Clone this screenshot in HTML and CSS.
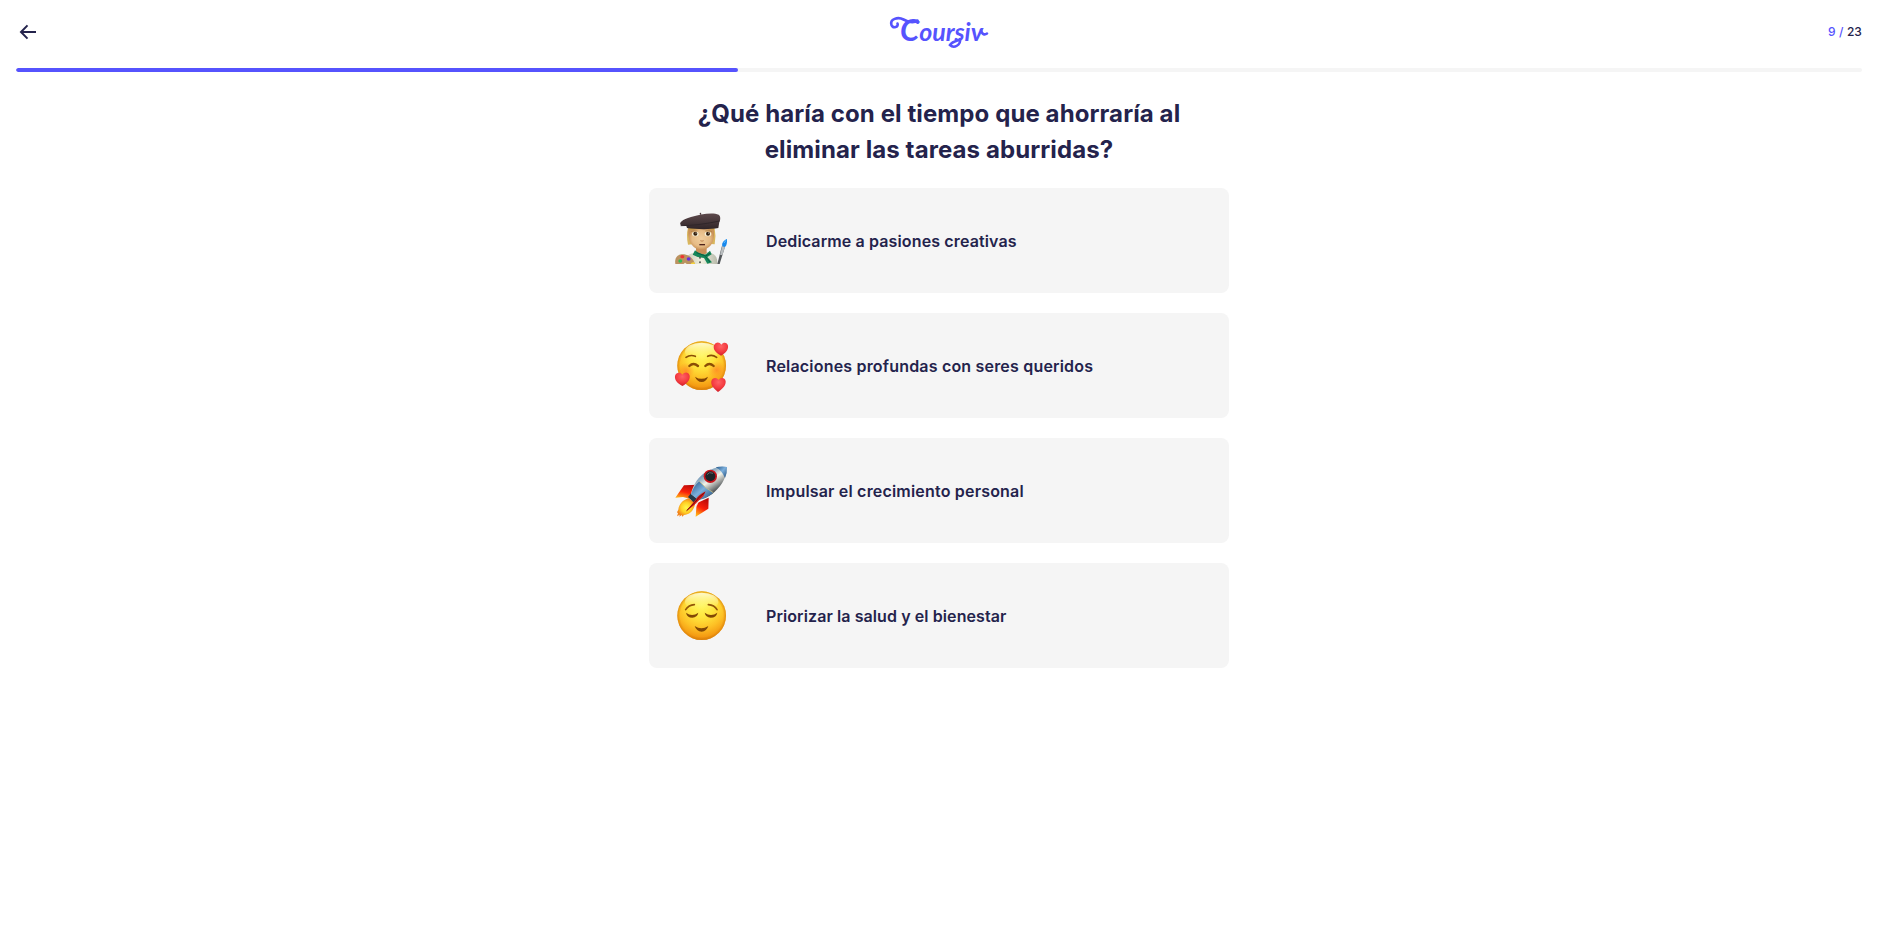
FILE: index.html
```html
<!DOCTYPE html>
<html lang="es">
<head>
<meta charset="utf-8">
<title>Coursiv</title>
<link rel="stylesheet" href="styles.css">
</head>
<body>
<header class="header">
  <div class="bar">
    <button class="back" type="button" aria-label="Atrás">
      <svg width="24" height="24" viewBox="0 0 24 24" fill="none" stroke="#24234c" stroke-width="2"><path d="M20 12H5.400M11.500 5.400L5 12l6.500 6.600"/></svg>
    </button>
    <svg class="logo" width="100" height="34" viewBox="0 0 100 34">
      <g fill="none" stroke="#5653fe" stroke-width="2.600" stroke-linecap="round">
        <path d="M8.500 8.500c1.500 3.500-4.500 5.500-6 1.500C.5 4 9 1.500 14.500 4.500c5 2.700 10 4 14 1"/>
        <path d="M71 24c1 6-6 10-10 6 2-3 6-4 9-5"/>
        <path d="M92 15c1 5 4 5 6 3.500"/>
      </g>
      <text class="logo-text" x="11" y="26" textLength="83" lengthAdjust="spacingAndGlyphs"><tspan class="logo-cap">C</tspan>oursiv</text>
    </svg>
    <div class="counter"><span class="current">9 /</span> 23</div>
  </div>
  <div class="progress"><div class="progress-fill" style="width:39.13%"></div></div>
</header>
<main class="quiz">
  <h1 class="title">¿Qué haría con el tiempo que ahorraría al eliminar las tareas aburridas?</h1>
  <div class="options">
    <button class="option" type="button">
      <svg class="emoji" viewBox="0 9 240 225">
        <defs>
          <linearGradient id="beret" x2="0" y2="1"><stop offset="0" stop-color="#5d494c"/><stop offset="1" stop-color="#302528"/></linearGradient>
          <radialGradient id="skin"><stop offset="0" stop-color="#f1ce9e"/><stop offset=".7" stop-color="#e6bb86"/><stop offset="1" stop-color="#c99258"/></radialGradient>
          <linearGradient id="coat"><stop offset="0" stop-color="#c8c9b9"/><stop offset=".5" stop-color="#f1f0df"/><stop offset="1" stop-color="#b7baaa"/></linearGradient>
        </defs>
        <path d="M79 192c-3-26 8-31 31-36h31c22 4 32 12 31 36z" fill="url(#coat)"/>
        <path d="M108 137h32v23l-15 8-17-8z" fill="#c98e59"/>
        <path d="M84 84q-6 20 0 50l13-1V80zM157 80l7 5q5 24 0 48l-11-1z" fill="#d9b65d"/>
        <path d="M85 82h76c5 38-5 66-37 67-31-1-42-30-39-67z" fill="url(#skin)"/>
        <path d="M84 83h76l1 7q-11-4-22-3-26-3-51 4z" fill="#c49945"/>
        <path d="M63 76c-8-8 4-17 30-25 28-9 66-15 83-7 7 5 5 17 2 22l-3 18c-25 5-67 4-94 0l-2-6z" fill="url(#beret)"/>
        <path d="M120 44l-1-5 4-1 1 6" fill="#4b393c"/>
        <path d="M62 77q51 0 117-14" fill="none" stroke="#30262a" stroke-width="3"/>
        <path d="M93 95q8-5 19-2M136 93q11-4 20 2" fill="none" stroke="#ad8046" stroke-width="2"/>
        <ellipse cx="106" cy="102" rx="10" ry="7" fill="#f7f1da"/><ellipse cx="144" cy="102" rx="10" ry="7" fill="#f7f1da"/>
        <circle cx="106" cy="101" r="6" fill="#35200e"/><circle cx="144" cy="101" r="6" fill="#35200e"/>
        <circle cx="108" cy="99" r="1.500" fill="#fff"/><circle cx="146" cy="99" r="1.500" fill="#fff"/>
        <path d="M121 122q5 3 10 0" stroke="#bd824e" stroke-width="3" fill="none"/><path d="M118 134h17" stroke="#4e211a" stroke-width="4"/>
        <path d="M105 151q16 14 33 12l12-11 5 11-13 8 14 16-14 4-10-17-19-3-15-7z" fill="#15865a"/>
        <path d="M109 158l28 10 13-8M137 170l13 16" stroke="#086044" stroke-width="3" fill="none"/>
        <circle cx="120" cy="173" r="3" fill="#555b56"/><circle cx="120" cy="187" r="3" fill="#555b56"/>
        <path d="M46 192c-3-16 5-28 19-29 22-1 34 12 40 29z" fill="#bb9260"/>
        <ellipse cx="67" cy="170" rx="6" ry="5" fill="#ed3532"/><ellipse cx="86" cy="177" rx="6" ry="5" fill="#6830df"/><ellipse cx="61" cy="183" rx="6" ry="5" fill="#31ba54"/><path d="M92 192q1-6 11-5l2 5z" fill="#f5d43c"/><path d="M71 192q4-8 9 0z" fill="#eee8ce"/>
        <path d="M172 192l14-55 9 3-16 52z" fill="#525659"/><path d="M180 164l7-27 8 3-8 26z" fill="#b9bdbf"/>
        <path d="M187 139c-3-9 4-18 14-22 0 10 0 19-6 24z" fill="#1688ed"/><path d="M192 129q2-5 7-8" stroke="#66beff" stroke-width="3" fill="none"/>
      </svg>
      <span class="label">Dedicarme a pasiones creativas</span>
    </button>
    <button class="option" type="button">
      <svg class="emoji" viewBox="0 -6 240 225">
        <defs>
          <radialGradient id="face" cx=".5" cy=".28" r=".74"><stop offset="0" stop-color="#fff75c"/><stop offset=".35" stop-color="#ffe53d"/><stop offset=".65" stop-color="#fdc025"/><stop offset=".88" stop-color="#f49a12"/><stop offset="1" stop-color="#d97607"/></radialGradient>
          <radialGradient id="rim"><stop offset=".88" stop-color="#dc850b" stop-opacity="0"/><stop offset="1" stop-color="#d98208" stop-opacity=".75"/></radialGradient>
          <linearGradient id="shine" x2="0" y2="1"><stop offset="0" stop-color="#fffce0" stop-opacity=".9"/><stop offset="1" stop-color="#fff67b" stop-opacity="0"/></linearGradient>
          <radialGradient id="blush"><stop offset="0" stop-color="#ff7824" stop-opacity=".65"/><stop offset="1" stop-color="#ff8924" stop-opacity="0"/></radialGradient>
          <radialGradient id="heart" cx=".5" cy=".3" r=".7"><stop offset="0" stop-color="#ff6365"/><stop offset=".6" stop-color="#f43b40"/><stop offset="1" stop-color="#cf1e29"/></radialGradient>
        </defs>
        <circle cx="125" cy="107" r="73" fill="url(#face)"/><circle cx="125" cy="107" r="73" fill="url(#rim)"/><ellipse cx="125" cy="65" rx="50" ry="27" fill="url(#shine)"/>
        <circle cx="78" cy="123" r="25" fill="url(#blush)"/><circle cx="170" cy="120" r="27" fill="url(#blush)"/>
        <g fill="none" stroke="#8b4e05" stroke-width="5" stroke-linecap="round"><path d="M78 82q13-9 28-3M143 79q13-7 27 3"/><path d="M88 108q12-12 26 0M136 108q12-12 25 0" stroke-width="7"/></g>
        <path d="M105 140q19 13 39 0-5 15-19 16-14-1-20-16z" fill="#824505"/>
        <path d="M183 77c-15-8-25-18-21-31 4-10 16-12 22-2 7-9 18-6 20 3 2 13-9 23-21 30z" fill="url(#heart)"/>
        <path d="M67 168c-13-7-24-17-22-30 3-11 16-13 22-4 7-10 19-8 22 3 2 13-10 25-22 31z" fill="url(#heart)"/>
        <path d="M174 186c-12-9-22-19-20-32 3-12 16-13 22-4 7-9 19-7 21 4 1 14-11 24-23 32z" fill="url(#heart)"/>
      </svg>
      <span class="label">Relaciones profundas con seres queridos</span>
    </button>
    <button class="option" type="button">
      <svg class="emoji" viewBox="0 -6 240 225">
        <defs>
          <linearGradient id="hull" x1=".25" y1=".15" x2=".75" y2=".85"><stop offset="0" stop-color="#467baf"/><stop offset=".25" stop-color="#9ab3c4"/><stop offset=".45" stop-color="#f4f4e9"/><stop offset=".65" stop-color="#a0a3a1"/><stop offset=".9" stop-color="#343b40"/></linearGradient>
          <linearGradient id="blue" x1="0" y1="0" x2="1" y2="1"><stop offset="0" stop-color="#215486"/><stop offset=".48" stop-color="#7cafdc"/><stop offset="1" stop-color="#1f4b79"/></linearGradient>
          <linearGradient id="fin" x1=".7" x2=".3" y2="1"><stop offset="0" stop-color="#b50909"/><stop offset=".55" stop-color="#fb210a"/><stop offset="1" stop-color="#ffb215"/></linearGradient>
          <radialGradient id="flame"><stop offset="0" stop-color="#fff94b"/><stop offset=".55" stop-color="#ffd126"/><stop offset="1" stop-color="#f28119"/></radialGradient>
        </defs>
        <path d="M115 89L72 91 46 128l23-2 20 5z" fill="url(#fin)"/>
        <path d="M146 128l-1 33-38 24 3-40z" fill="url(#fin)"/>
        <path d="M86 130c-18 5-29 17-31 34l-4 8 3 3-3 9 8-5-1 6 7-5 2 5 5-5c18-2 29-12 34-36z" fill="url(#flame)"/>
        <path d="M84 126l9-11 20 17-10 12z" fill="#24394a"/>
        <path d="M93 117c7-30 22-51 44-65 21-13 43-20 63-16 1 24-9 44-23 61-18 22-35 32-62 38z" fill="url(#hull)"/>
        <path d="M93 117q7-23 25-38 18 20 42 34-20 17-45 22z" fill="url(#blue)"/>
        <path d="M167 37q17-4 34-1 1 19-6 33-10-24-28-32z" fill="url(#blue)"/>
        <path d="M118 79q18 22 42 34" stroke="#d6c678" stroke-width="2" fill="none"/>
        <circle cx="151" cy="64" r="20" fill="#c7131b"/><circle cx="151" cy="64" r="15" fill="#1d2429"/><path d="M141 59q7-10 18-4" fill="none" stroke="#62666a" stroke-width="3"/>
        <path d="M137 109q-20 9-31 26l-28 34q26-18 43-37 12-9 16-23z" fill="#da1716"/><path d="M134 113q-18 12-29 29L80 167" fill="none" stroke="#711012" stroke-width="3"/>
        <path d="M108 146l9-8-8 18z" fill="#eee"/>
      </svg>
      <span class="label">Impulsar el crecimiento personal</span>
    </button>
    <button class="option" type="button">
      <svg class="emoji" viewBox="0 -6 240 225">
        <circle cx="125" cy="107" r="73" fill="url(#face)"/><circle cx="125" cy="107" r="73" fill="url(#rim)"/><ellipse cx="125" cy="65" rx="50" ry="27" fill="url(#shine)"/>
        <g fill="none" stroke="#925507" stroke-width="5" stroke-linecap="round"><path d="M77 89q9-14 26-15M145 74q18 1 26 15"/></g>
        <path d="M78 98q18 14 37 0-3 14-18 15-16 0-19-15zM134 98q19 14 38 0-3 15-20 15-15-1-18-15zM104 138q20 14 41 0-5 16-20 17-16-1-21-17z" fill="#824805"/>
      </svg>
      <span class="label">Priorizar la salud y el bienestar</span>
    </button>
  </div>
</main>
</body>
</html>
```
FILE: styles.css
```css
* { box-sizing: border-box; }
body { margin: 0; background: #fff; color: #24234c; font-family: Inter, "Liberation Sans", sans-serif; }
button { border: 0; padding: 0; background: none; font: inherit; color: inherit; cursor: pointer; }
.header { padding: 0 16px; }
.bar { height: 68px; padding-bottom: 4px; display: grid; grid-template-columns: 1fr 100px 1fr; align-items: center; }
.back { width: 24px; height: 24px; }
.back svg { display: block; }
.logo { display: block; overflow: visible; }
.logo-text { font: italic 700 25px Lato, sans-serif; fill: #5653fe; }
.logo-cap { font-size: 31px; }
.counter { justify-self: end; font-size: 12px; font-weight: 500; line-height: 16px; letter-spacing: 0.1px; }
.current { color: #5653fe; }
.progress { height: 4px; border-radius: 2px; background: #f5f5f5; overflow: hidden; }
.progress-fill { height: 100%; border-radius: 2px; background: #5653fe; }
.quiz { width: 580px; margin: 0 auto; padding-top: 24px; }
.title { margin: 0 0 20px; padding: 0 40px; font-size: 24px; line-height: 36px; font-weight: 700; letter-spacing: 0.1px; text-align: center; }
.options { display: flex; flex-direction: column; gap: 20px; }
.option { height: 105px; padding: 0 11px; border-radius: 8px; background: #f5f5f5; display: flex; align-items: center; gap: 26px; text-align: left; }
.emoji { width: 80px; height: 75px; flex: none; }
.label { font-size: 16px; line-height: 24px; font-weight: 600; letter-spacing: 0.13px; }
.option:nth-child(2) .label,
.option:nth-child(3) .label { letter-spacing: 0.19px; }
.option:nth-child(4) .label { letter-spacing: 0.09px; }
```
